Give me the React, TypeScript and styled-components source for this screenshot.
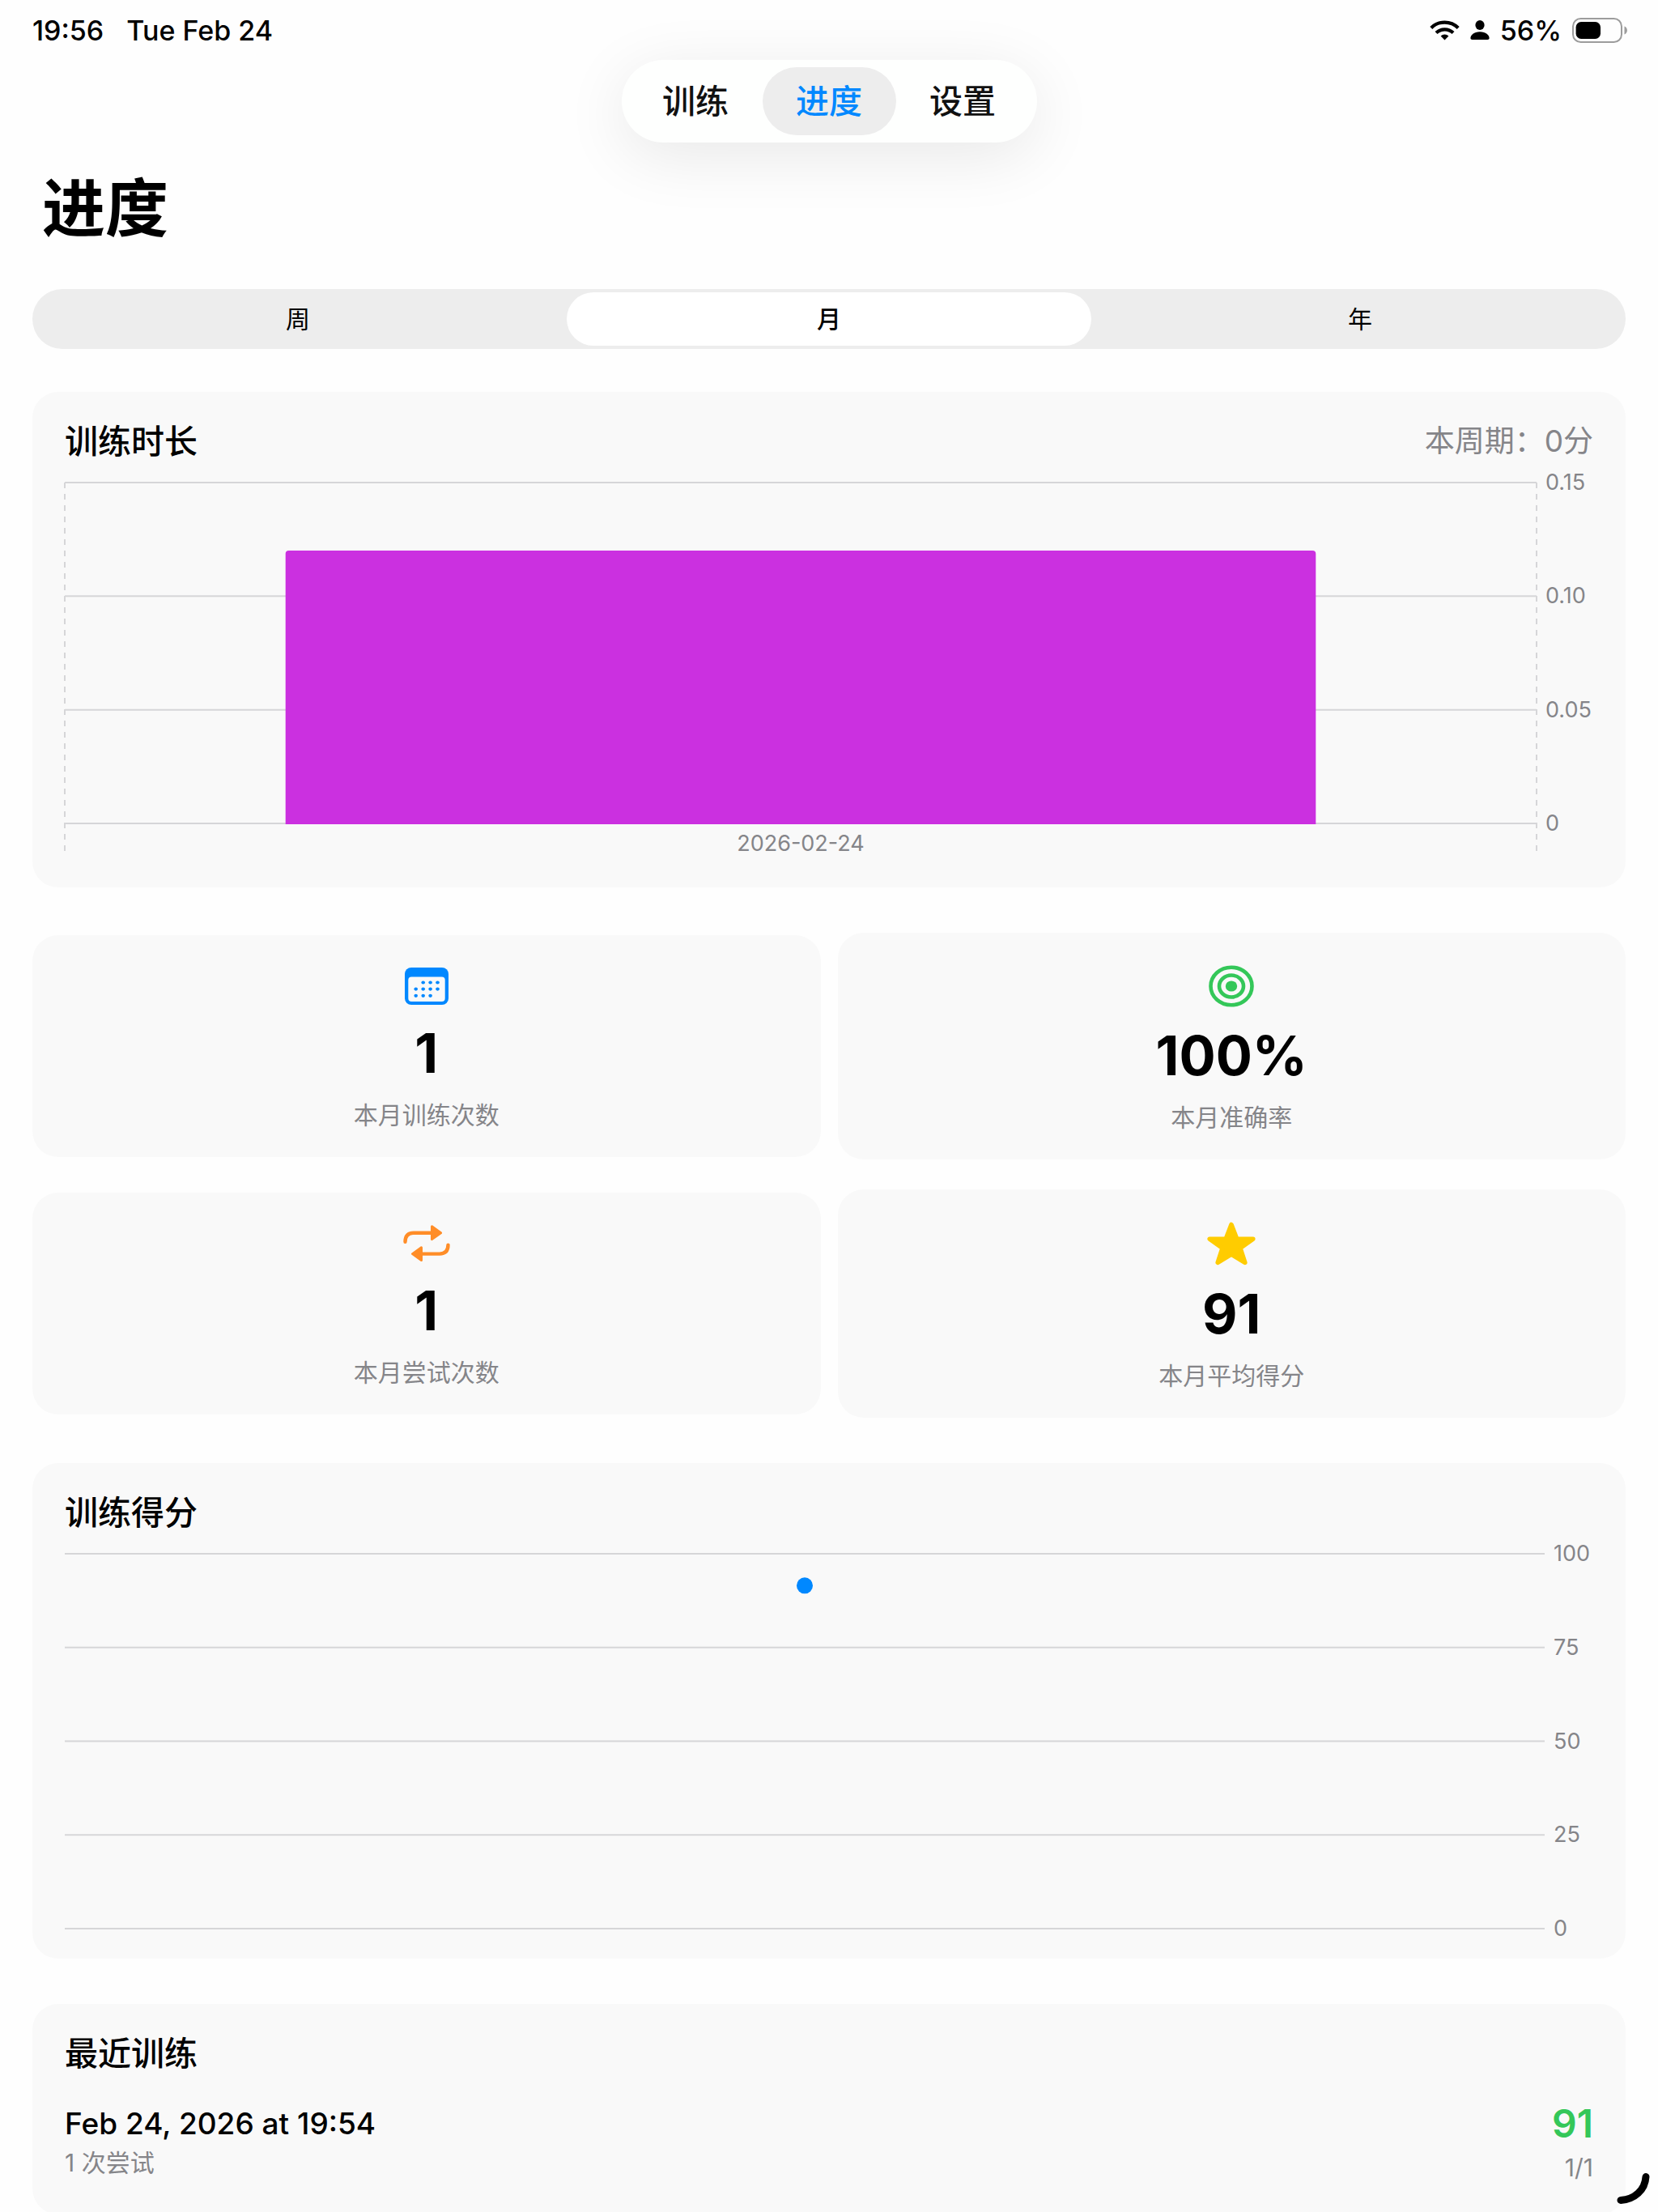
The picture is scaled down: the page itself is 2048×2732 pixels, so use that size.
import React, { useState } from "react";
import styled, { createGlobalStyle } from "styled-components";

const color = {
  page: "#fefefe",
  card: "#f9f9f9",
  track: "#ededed",
  text: "#000000",
  muted: "#858589",
  grid: "#d6d6d8",
  blue: "#0088ff",
  green: "#34c759",
  orange: "#ff8d28",
  yellow: "#ffcc00",
  purple: "#cb30e0",
};

const GlobalStyle = createGlobalStyle`
  *, *::before, *::after { box-sizing: border-box; }
  body {
    margin: 0;
    background: ${color.page};
    color: ${color.text};
    font-family: Inter, "Noto Sans CJK SC", sans-serif;
  }
  h1, h2, p, ul { margin: 0; padding: 0; }
  button { border: 0; padding: 0; font: inherit; color: inherit; background: none; cursor: pointer; }
`;

const Screen = styled.div`
  display: flex;
  flex-direction: column;
  height: 100vh;
  overflow: hidden;
`;

const StatusBar = styled.header`
  flex: none;
  display: flex;
  align-items: center;
  justify-content: space-between;
  height: 74px;
  padding: 0 38px 0 40px;
  font-size: 34px;
  font-weight: 500;
`;

const StatusGroup = styled.div<{ $gap: number }>`
  display: flex;
  align-items: center;
  gap: ${(p) => p.$gap}px;
`;

const TabBar = styled.nav`
  flex: none;
  align-self: center;
  display: flex;
  padding: 9px;
  border-radius: 51px;
  background: #fefffe;
  box-shadow: 0 16px 80px rgba(0, 0, 0, 0.09);
`;

const Tab = styled.button<{ $active: boolean }>`
  width: 165px;
  height: 84px;
  border-radius: 42px;
  font-size: 41px;
  line-height: 84px;
  font-weight: 500;
  color: ${(p) => (p.$active ? color.blue : "#111111")};
  background: ${(p) => (p.$active ? color.track : "transparent")};
`;

const Content = styled.main`
  flex: none;
  display: flex;
  flex-direction: column;
  padding: 42px 40px 56px;
`;

const PageTitle = styled.h1`
  margin-left: 12px;
  font-size: 78px;
  line-height: 80px;
  font-weight: 700;
`;

const Segments = styled.div`
  display: grid;
  grid-template-columns: repeat(3, 1fr);
  height: 74px;
  margin: 59px 0 53px;
  padding: 4px 0;
  border-radius: 37px;
  background: ${color.track};
`;

const Segment = styled.button<{ $active: boolean }>`
  margin: 0 4px;
  border-radius: 33px;
  font-size: 30px;
  line-height: 66px;
  font-weight: ${(p) => (p.$active ? 500 : 400)};
  background: ${(p) => (p.$active ? "#ffffff" : "transparent")};
`;

const Sections = styled.div`
  display: flex;
  flex-direction: column;
  gap: 56px;
`;

const Card = styled.section`
  padding: 40px;
  border-radius: 32px;
  background: ${color.card};
`;

const CardHeader = styled.div`
  display: flex;
  align-items: center;
  justify-content: space-between;
  height: 42px;
  margin-bottom: 30px;
`;

const CardTitle = styled.h2`
  font-size: 41px;
  line-height: 42px;
  font-weight: 500;
`;

const Period = styled.p`
  font-size: 37px;
  line-height: 42px;
  color: ${color.muted};
`;

const Chart = styled.div<{ $axis: number }>`
  display: grid;
  grid-template-columns: 1fr ${(p) => p.$axis}px;
  column-gap: 11px;
`;

const Plot = styled.svg<{ $height: number }>`
  display: block;
  width: 100%;
  height: ${(p) => p.$height}px;
  overflow: visible;
`;

const AxisY = styled.div`
  display: flex;
  flex-direction: column;
  justify-content: space-between;
  margin: -13px 0;
  font-size: 27px;
  line-height: 26px;
  color: ${color.muted};
`;

const AxisX = styled.div`
  height: 39px;
  padding-top: 12px;
  text-align: center;
  font-size: 27px;
  line-height: 26px;
  color: ${color.muted};
`;

const Stats = styled.div`
  display: grid;
  grid-template-columns: 1fr 1fr;
  align-items: center;
  gap: 37px 21px;
`;

const StatCard = styled(Card)`
  display: flex;
  flex-direction: column;
  align-items: center;
  gap: 20px;
  padding-bottom: 36px;
  svg { display: block; }
`;

const StatValue = styled.p`
  font-size: 67px;
  line-height: 80px;
  font-weight: 700;
`;

const StatLabel = styled.p`
  font-size: 30px;
  line-height: 32px;
  color: ${color.muted};
`;

const Session = styled.div`
  display: flex;
  justify-content: space-between;
`;

const SessionColumn = styled.div<{ $align?: string }>`
  display: flex;
  flex-direction: column;
  align-items: ${(p) => p.$align ?? "flex-start"};
`;

const SessionDate = styled.p`
  padding-top: 14px;
  font-size: 37px;
  line-height: 44px;
  font-weight: 500;
`;

const SessionScore = styled.p`
  padding-top: 8px;
  font-size: 48px;
  line-height: 56px;
  font-weight: 600;
  color: ${color.green};
`;

const SessionNote = styled.p`
  padding-top: 8px;
  font-size: 30px;
  line-height: 36px;
  color: ${color.muted};
`;

const Corner = styled.svg`
  position: fixed;
  right: 6px;
  bottom: 8px;
`;

const WifiIcon = () => (
  <svg width="37" height="25" viewBox="0 0 37 25" aria-label="Wi-Fi" fill="none" stroke="#000" strokeWidth="4.2">
    <path d="M1.8 9.4a23.8 23.8 0 0 1 33.4 0" />
    <path d="M8 15.6a15 15 0 0 1 21 0" />
    <path d="M18.5 24.4l-4.9-5a7 7 0 0 1 9.8 0z" fill="#000" stroke="none" />
  </svg>
);

const PersonIcon = () => (
  <svg width="24" height="24" viewBox="0 0 24 24" aria-hidden="true">
    <ellipse cx="12" cy="6" rx="5.6" ry="6" />
    <path d="M2.6 24C1.2 24 .4 23.3.4 22c0-3.6 4.4-7.8 11.6-7.8s11.600 4.200 11.600 7.800c0 1.300-.8 2-2.200 2z" />
  </svg>
);

const BatteryIcon = () => (
  <svg width="68" height="31" viewBox="0 0 68 31" aria-hidden="true">
    <rect x="1" y="1" width="60" height="29" rx="9.5" fill="none" stroke="#9c9c9c" strokeWidth="2" />
    <rect x="4.6" y="5" width="30.4" height="21" rx="6.5" />
    <path d="M64.5 10.5c2.2.8 3.4 2.8 3.4 5s-1.2 4.2-3.4 5z" fill="#9c9c9c" />
  </svg>
);

const CalendarIcon = () => {
  const columns = [13.7, 22.7, 31.6, 40.5];
  const rows = [
    { y: 18.5, from: 1, to: 4 },
    { y: 26.6, from: 0, to: 4 },
    { y: 34.8, from: 0, to: 3 },
  ];
  return (
    <svg width="54" height="46" viewBox="0 0 54 46" aria-hidden="true">
      <rect width="54" height="46" rx="8" fill={color.blue} />
      <rect x="4.3" y="11.5" width="45.4" height="30.5" rx="4" fill={color.card} />
      {rows.map((row) =>
        columns.slice(row.from, row.to).map((x) => (
          <ellipse key={`${x}-${row.y}`} cx={x} cy={row.y} rx="2.3" ry="2.1" fill={color.blue} />
        ))
      )}
    </svg>
  );
};

const TargetIcon = () => (
  <svg width="56" height="52" viewBox="0 0 56 52" fill="none" stroke={color.green} strokeWidth="4.6" aria-hidden="true">
    <ellipse cx="28" cy="26" rx="25.5" ry="23.3" />
    <ellipse cx="28" cy="26" rx="15" ry="13.5" />
    <ellipse cx="28" cy="26" rx="7.2" ry="6.6" fill={color.green} stroke="none" />
  </svg>
);

const RepeatIcon = () => {
  const half = (
    <>
      <path d="M2.5 20.8C2.5 13 6.5 9.8 13 9.8H36" fill="none" strokeWidth="4.4" />
      <path d="M35.5 1.8L46.5 9.8L35.5 17.6Z" strokeWidth="3" />
    </>
  );
  return (
    <svg width="58" height="46" viewBox="0 0 58 46" fill={color.orange} stroke={color.orange} strokeLinecap="round" strokeLinejoin="round" aria-hidden="true">
      {half}
      <g transform="rotate(180 29 22.7)">{half}</g>
    </svg>
  );
};

const StarIcon = () => (
  <svg width="60" height="54" viewBox="0 0 60 54" aria-hidden="true">
    <path
      d="M30 3.5L36.8 21.2H56.8L41 32.6L46.8 50.4L30 40L13.2 50.4L19 32.6L3.2 21.2H23.2Z"
      fill={color.yellow}
      stroke={color.yellow}
      strokeWidth="5.6"
      strokeLinejoin="round"
    />
  </svg>
);

const GridLines = ({ count }: { count: number }) => (
  <>
    {Array.from({ length: count }, (_, i) => {
      const y = `${(i / (count - 1)) * 100}%`;
      return <line key={y} x1="0" x2="100%" y1={y} y2={y} stroke={color.grid} strokeWidth="2" />;
    })}
  </>
);

const DurationChart = () => (
  <Chart $axis={59}>
    <Plot $height={421} role="img" aria-label="训练时长">
      <GridLines count={4} />
      <line x1="0" x2="0" y1="0" y2="462" stroke={color.grid} strokeWidth="2" strokeDasharray="7 7" />
      <line x1="100%" x2="100%" y1="0" y2="462" stroke={color.grid} strokeWidth="2" strokeDasharray="7 7" />
      <svg width="100%" height="422" overflow="hidden">
        <rect x="15%" y="84" width="70%" height="350" rx="4" fill={color.purple} />
      </svg>
    </Plot>
    <AxisY>
      {["0.15", "0.10", "0.05", "0"].map((tick) => (
        <span key={tick}>{tick}</span>
      ))}
    </AxisY>
    <AxisX>2026-02-24</AxisX>
  </Chart>
);

const ScoreCard = styled(Card)`
  padding-bottom: 37px;
`;

const ScoreChart = () => (
  <Chart $axis={49}>
    <Plot $height={463} role="img" aria-label="训练得分">
      <GridLines count={5} />
      <circle cx="50%" cy="8.5%" r="10" fill={color.blue} />
    </Plot>
    <AxisY>
      {["100", "75", "50", "25", "0"].map((tick) => (
        <span key={tick}>{tick}</span>
      ))}
    </AxisY>
  </Chart>
);

const stats = [
  { icon: <CalendarIcon />, value: "1", label: "本月训练次数" },
  { icon: <TargetIcon />, value: "100%", label: "本月准确率" },
  { icon: <RepeatIcon />, value: "1", label: "本月尝试次数" },
  { icon: <StarIcon />, value: "91", label: "本月平均得分" },
];

export default function App() {
  const [tab, setTab] = useState("进度");
  const [range, setRange] = useState("月");

  return (
    <Screen>
      <GlobalStyle />
      <StatusBar>
        <StatusGroup $gap={28}>
          <span>19:56</span>
          <span>Tue Feb 24</span>
        </StatusGroup>
        <StatusGroup $gap={13}>
          <WifiIcon />
          <PersonIcon />
          <span>56%</span>
          <BatteryIcon />
        </StatusGroup>
      </StatusBar>
      <TabBar>
        {["训练", "进度", "设置"].map((name) => (
          <Tab key={name} $active={tab === name} onClick={() => setTab(name)}>
            {name}
          </Tab>
        ))}
      </TabBar>
      <Content>
        <PageTitle>进度</PageTitle>
        <Segments>
          {["周", "月", "年"].map((name) => (
            <Segment key={name} $active={range === name} aria-pressed={range === name} onClick={() => setRange(name)}>
              {name}
            </Segment>
          ))}
        </Segments>
        <Sections>
          <Card>
            <CardHeader>
              <CardTitle>训练时长</CardTitle>
              <Period>本周期：0分</Period>
            </CardHeader>
            <DurationChart />
          </Card>
          <Stats>
            {stats.map((stat) => (
              <StatCard key={stat.label}>
                {stat.icon}
                <StatValue>{stat.value}</StatValue>
                <StatLabel>{stat.label}</StatLabel>
              </StatCard>
            ))}
          </Stats>
          <ScoreCard>
            <CardHeader>
              <CardTitle>训练得分</CardTitle>
            </CardHeader>
            <ScoreChart />
          </ScoreCard>
          <Card>
            <CardHeader>
              <CardTitle>最近训练</CardTitle>
            </CardHeader>
            <Session>
              <SessionColumn>
                <SessionDate>Feb 24, 2026 at 19:54</SessionDate>
                <SessionNote>1 次尝试</SessionNote>
              </SessionColumn>
              <SessionColumn $align="flex-end">
                <SessionScore>91</SessionScore>
                <SessionNote>1/1</SessionNote>
              </SessionColumn>
            </Session>
          </Card>
        </Sections>
      </Content>
      <Corner width="46" height="42" viewBox="0 0 46 42" fill="none" stroke="#000" strokeWidth="9" strokeLinecap="round" aria-hidden="true">
        <path d="M37 6.5C36 23 23 34.5 6 35.5" />
      </Corner>
    </Screen>
  );
}
